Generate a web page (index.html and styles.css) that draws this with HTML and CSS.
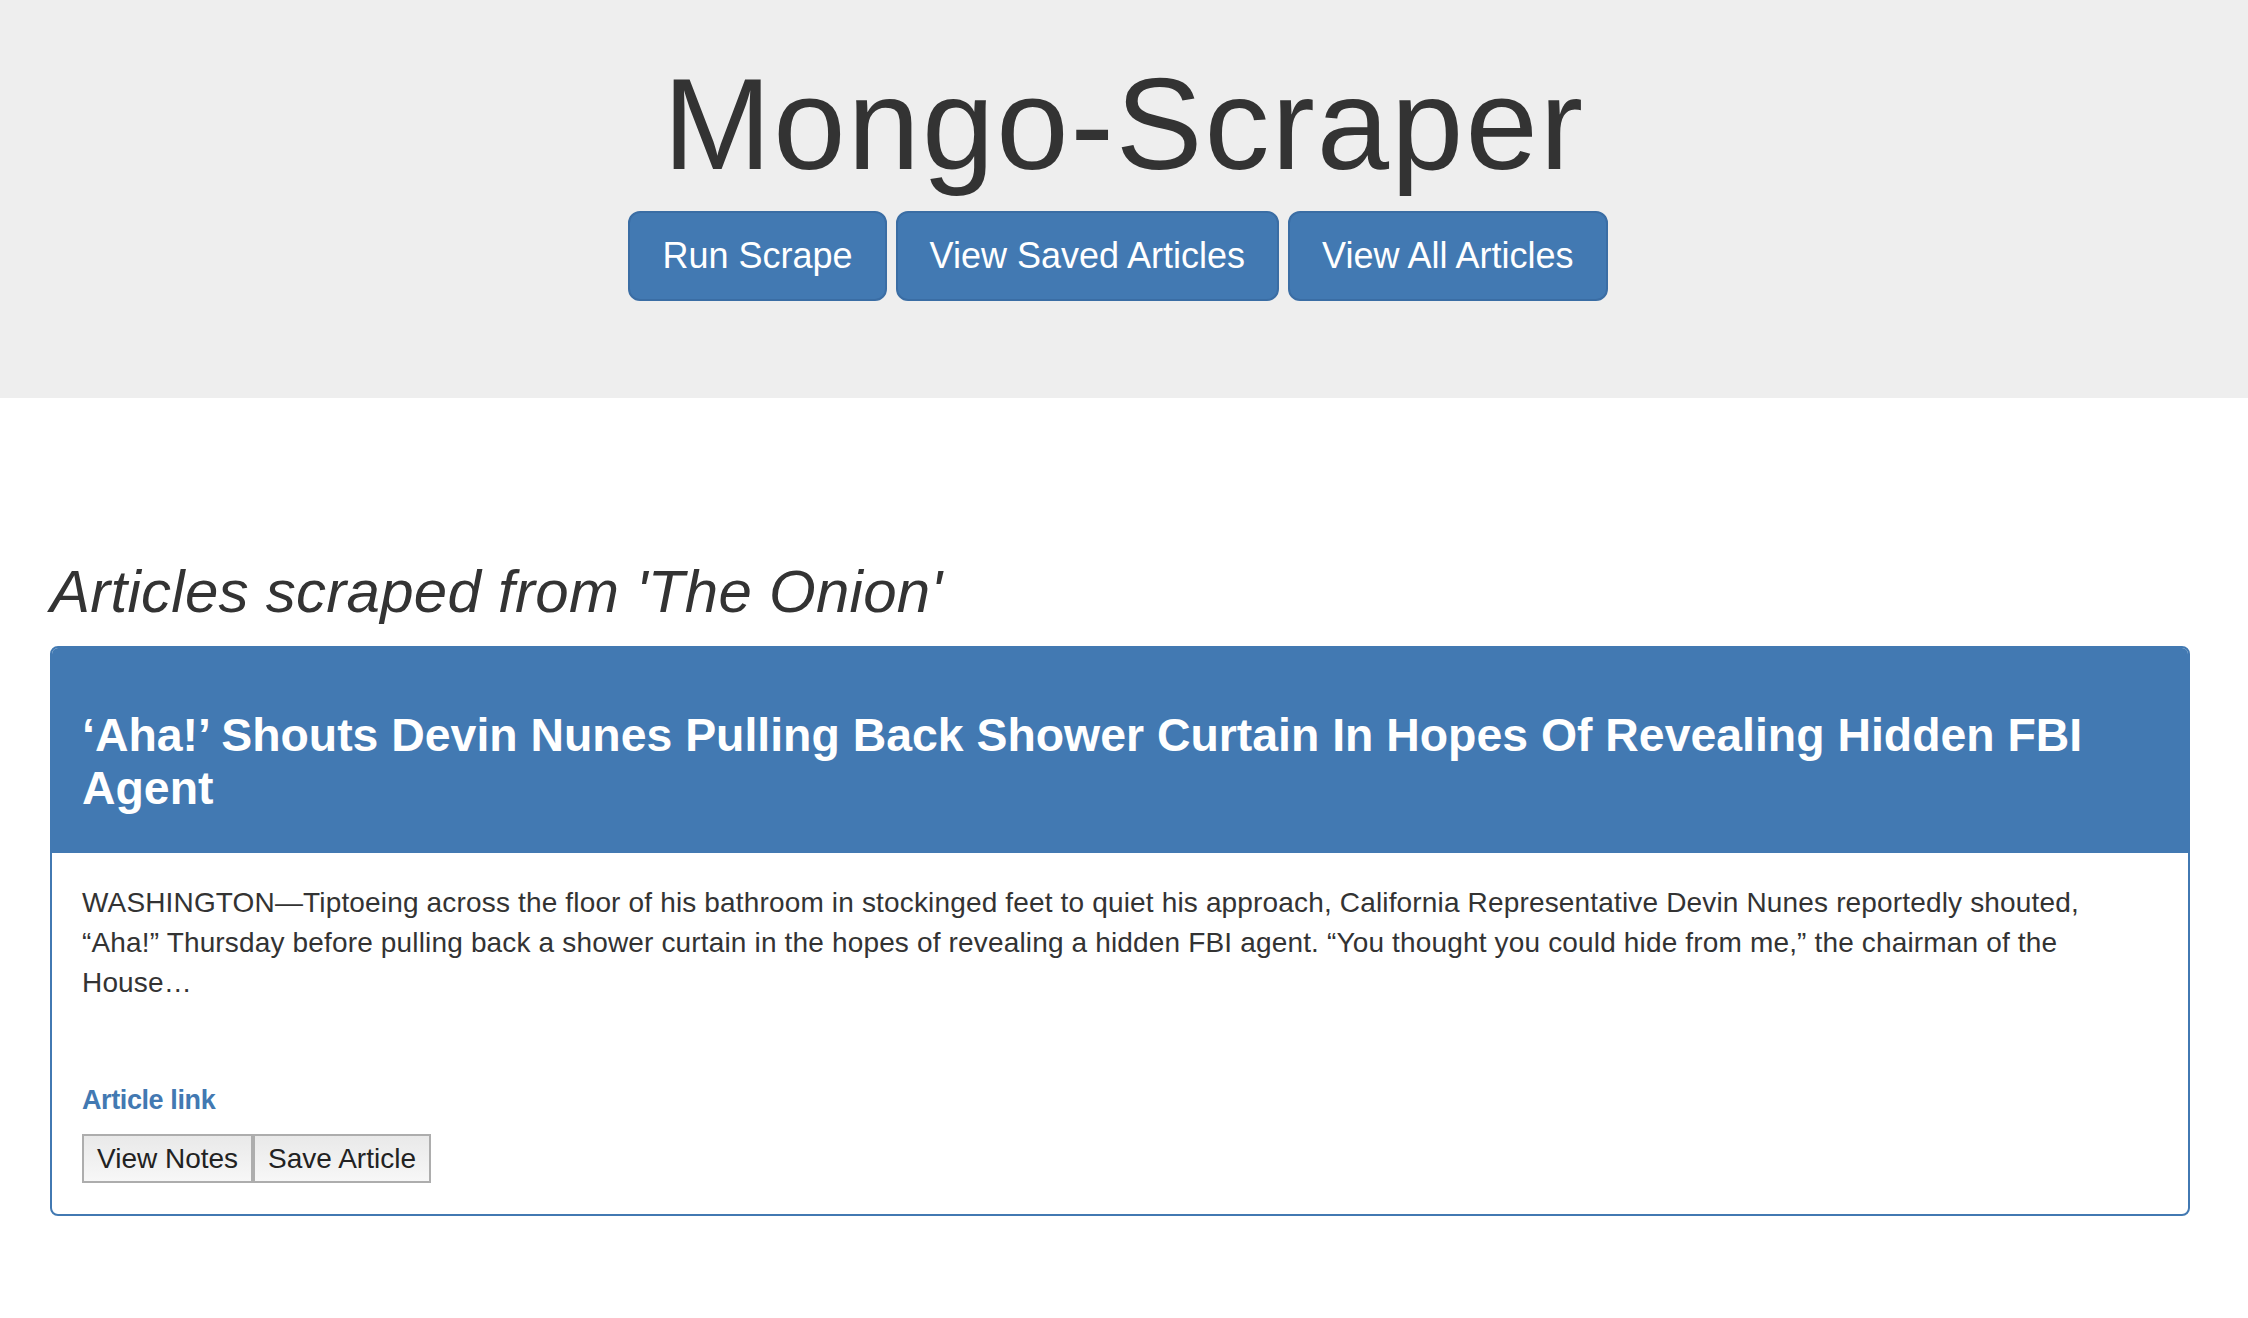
FILE: index.html
```html
<!DOCTYPE html>
<html lang="en">
<head>
<meta charset="utf-8">
<title>Mongo-Scraper</title>
<link rel="stylesheet" href="styles.css">
</head>
<body>
<header class="jumbotron">
  <h1 class="site-title">Mongo-Scraper</h1>
  <nav class="actions">
    <a class="btn-primary" href="#">Run Scrape</a>
    <a class="btn-primary" href="#">View Saved Articles</a>
    <a class="btn-primary" href="#">View All Articles</a>
  </nav>
</header>
<main class="content">
  <h2 class="section-title">Articles scraped from 'The Onion'</h2>
  <article class="panel">
    <div class="panel-heading">
      <h3 class="panel-title">‘Aha!’ Shouts Devin Nunes Pulling Back Shower Curtain In Hopes Of Revealing Hidden FBI Agent</h3>
    </div>
    <div class="panel-body">
      <p class="summary">WASHINGTON—Tiptoeing across the floor of his bathroom in stockinged feet to quiet his approach, California Representative Devin Nunes reportedly shouted, “Aha!” Thursday before pulling back a shower curtain in the hopes of revealing a hidden FBI agent. “You thought you could hide from me,” the chairman of the House…</p>
      <a class="article-link" href="#">Article link</a>
      <div class="panel-actions">
        <button class="btn-default" type="button">View Notes</button><button class="btn-default" type="button">Save Article</button>
      </div>
    </div>
  </article>
</main>
</body>
</html>
```

FILE: styles.css
```css
html, body {
  margin: 0;
  padding: 0;
  background: #ffffff;
}

body {
  font-family: "Liberation Sans", Arial, Helvetica, sans-serif;
  font-size: 28px;
  line-height: 40px;
  color: #333333;
}

.jumbotron {
  background: #eeeeee;
  padding: 54px 0 97px;
  display: flex;
  flex-direction: column;
  align-items: center;
}

.site-title {
  margin: 0;
  font-size: 130px;
  line-height: 140px;
  letter-spacing: 2px;
  font-weight: 400;
  color: #333333;
}

.actions {
  margin-top: 17px;
  display: flex;
  gap: 9px;
  margin-right: 12px;
}

.btn-primary {
  display: block;
  padding: 19px 32px;
  font-size: 36px;
  line-height: 48px;
  color: #ffffff;
  text-decoration: none;
  background: #4279b2;
  border: 2px solid #3a6da4;
  border-radius: 12px;
}

.content {
  padding: 0 58px 0 50px;
}

.section-title {
  margin: 161px 0 21px;
  font-size: 60px;
  line-height: 66px;
  letter-spacing: 0.27px;
  font-weight: 400;
  font-style: italic;
  color: #333333;
}

.panel {
  border: 2px solid #4279b2;
  border-radius: 8px;
  background: #ffffff;
}

.panel-heading {
  background: #4279b2;
  color: #ffffff;
  padding: 61px 30px 38px;
  border-radius: 6px 6px 0 0;
}

.panel-title {
  margin: 0;
  font-size: 46.4px;
  line-height: 52.8px;
  font-weight: 700;
}

.panel-body {
  padding: 30px 30px 31px;
  display: flex;
  flex-direction: column;
  align-items: flex-start;
}

.summary {
  margin: 0 0 77px;
  max-width: 2030px;
  letter-spacing: 0.16px;
}

.article-link {
  color: #4279b2;
  font-size: 27px;
  letter-spacing: -0.4px;
  font-weight: 700;
  text-decoration: none;
}

.panel-actions {
  margin-top: 14px;
  display: flex;
}

.btn-default {
  font-family: "Liberation Sans", Arial, Helvetica, sans-serif;
  font-size: 28px;
  line-height: 33px;
  color: #222222;
  padding: 6px 13px;
  margin: 0;
  background: linear-gradient(#e9e9e9, #f7f7f7);
  border: 2px solid #adadad;
  border-radius: 0;
}
```
